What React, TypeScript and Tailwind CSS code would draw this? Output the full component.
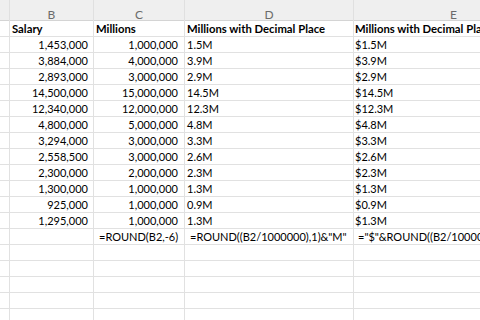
const rows: [string, string, string, string, string][] = [
  ["Salary", "Millions", "Millions with Decimal Place", "Millions with Decimal Place", "h"],
  ["1,453,000", "1,000,000", "1.5M", "$1.5M", ""],
  ["3,884,000", "4,000,000", "3.9M", "$3.9M", ""],
  ["2,893,000", "3,000,000", "2.9M", "$2.9M", ""],
  ["14,500,000", "15,000,000", "14.5M", "$14.5M", ""],
  ["12,340,000", "12,000,000", "12.3M", "$12.3M", ""],
  ["4,800,000", "5,000,000", "4.8M", "$4.8M", ""],
  ["3,294,000", "3,000,000", "3.3M", "$3.3M", ""],
  ["2,558,500", "3,000,000", "2.6M", "$2.6M", ""],
  ["2,300,000", "2,000,000", "2.3M", "$2.3M", ""],
  ["1,300,000", "1,000,000", "1.3M", "$1.3M", ""],
  ["925,000", "1,000,000", "0.9M", "$0.9M", ""],
  ["1,295,000", "1,000,000", "1.3M", "$1.3M", ""],
  ["", "=ROUND(B2,-6)", '=ROUND((B2/1000000),1)&"M"', '="$"&ROUND((B2/1000000),1)&"M"', "f"],
];

const cols = "grid grid-cols-[10px_84px_91px_169px_200px]";
const cell = "h-[16px] border-r border-b border-[#e1e1e1] whitespace-nowrap overflow-visible flex items-end leading-[14px]";

export default function App() {
  return (
    <div
      className="w-[480px] h-[320px] overflow-hidden bg-white text-black text-[11px]"
      style={{ fontFamily: "Lato, 'Liberation Sans', sans-serif" }}
    >
      {/* column headers */}
      <div className={`${cols} h-[21px] bg-[#efefef] border-b border-[#d4d4d4] text-[#6b6b6b] text-[12px]`}>
        {["", "B", "C", "D", "E"].map((l, i) => (
          <div key={i} className="border-r border-[#e0e0e0] flex items-center justify-center pt-[6px]">
            {l}
          </div>
        ))}
      </div>

      {rows.map((r, i) => {
        const head = r[4] === "h";
        const formula = r[4] === "f";
        return (
          <div key={i} className={`${cols} ${head ? "font-bold text-[11.3px]" : ""}`}>
            <div className={cell} />
            <div className={`${cell} ${head ? "pl-[2px]" : "justify-end pr-[5px]"}`}>{r[0]}</div>
            <div className={`${cell} ${head ? "pl-[2px]" : formula ? "pl-[5px]" : "justify-end pr-[6px]"}`}>{r[1]}</div>
            <div className={`${cell} ${formula ? "pl-[5px]" : "pl-[2px]"}`}>{r[2]}</div>
            <div className={`${cell} ${formula ? "pl-[4px]" : "pl-[1px]"}`}>{r[3]}</div>
          </div>
        );
      })}

      {Array.from({ length: 6 }).map((_, i) => (
        <div key={`e${i}`} className={cols}>
          {Array.from({ length: 5 }).map((_, j) => (
            <div key={j} className={cell} />
          ))}
        </div>
      ))}
    </div>
  );
}
